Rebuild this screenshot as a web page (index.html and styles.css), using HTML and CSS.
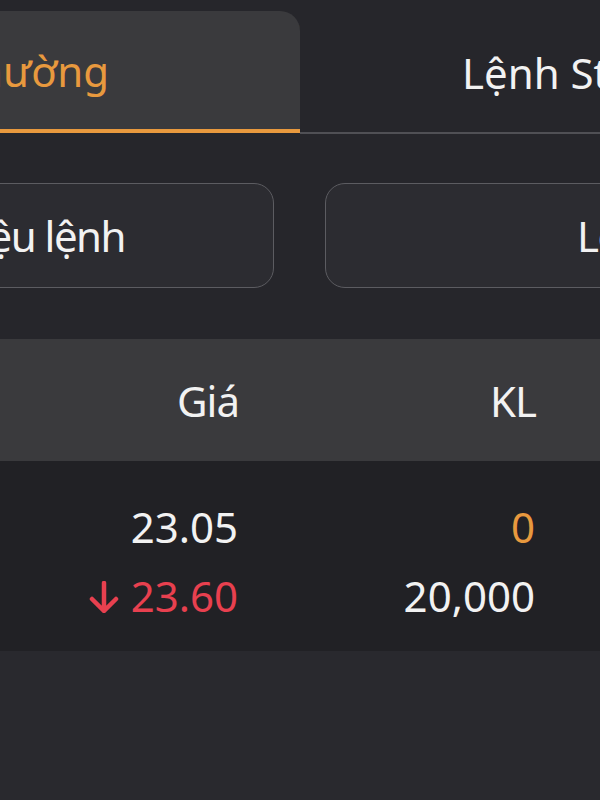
FILE: index.html
```html
<!DOCTYPE html>
<html lang="vi">

<head>
  <meta charset="UTF-8">
  <meta name="viewport" content="width=device-width, initial-scale=1.0">
  <title>Sổ lệnh</title>

  <link rel="stylesheet" href="styles.css">
</head>

<body>
  <main class="app">

    <nav class="tabs">
      <div class="tab tab-active"><span>Lệnh Thường</span></div>
      <div class="tab tab-other"><span>Lệnh Stop</span></div>
    </nav>

    <section class="fields">
      <div class="field field-left"><span>Số hiệu lệnh</span></div>
      <div class="field field-right"><span>Loại lệnh</span></div>
    </section>

    <section class="table">
      <div class="row head">
        <div class="cell">Giá</div>
        <div class="cell">KL</div>
        <div class="cell"></div>
      </div>

      <div class="body">
        <div class="row">
          <div class="cell">23.05</div>
          <div class="cell orange">0</div>
          <div class="cell"></div>
        </div>
        <div class="row">
          <div class="cell red">
            <svg class="arrow" width="30" height="32" viewBox="0 0 30 32">
              <path d="M15 2 V29 M3 18 L15 30 L27 18" fill="none" stroke="currentColor" stroke-width="4.5" stroke-linecap="round" stroke-linejoin="round"/>
            </svg>23.60
          </div>
          <div class="cell">20,000</div>
          <div class="cell"></div>
        </div>
      </div>
    </section>

  </main>
</body>

</html>
```

FILE: styles.css
```css
:root {
  --bg: #26262b;
  --panel: #3a3a3d;
  --rows: #212125;
  --line: #505055;
  --text: #f2f2f2;
  --orange: #e8993e;
  --red: #e8404f;
}

* {
  box-sizing: border-box;
}

body {
  margin: 0;
  overflow: hidden;
  background: #29292e;
  color: var(--text);
  font-family: "Noto Sans", "Open Sans", sans-serif;
  font-size: 42px;
}

/* the phone view is cropped, so the app starts left of the window */
.app {
  width: 1200px;
  margin-left: -300px;
  background: var(--bg);
  overflow: hidden;
}

.tabs {
  display: grid;
  grid-template-columns: 600px 600px;
  align-items: end;
  padding-top: 11px;
}

.tab {
  display: flex;
  align-items: center;
  white-space: nowrap;
}

.tab-active {
  height: 122px;
  justify-content: flex-end;
  padding-right: 191px;
  padding-bottom: 4px;
  background: var(--panel);
  color: var(--orange);
  border-radius: 0 20px 0 0;
  box-shadow: inset 0 -4px 0 var(--orange);
}

.tab-other {
  height: 122px;
  padding-left: 162px;
  border-bottom: 2px solid var(--line);
  margin-bottom: -1px;
}

.fields {
  display: grid;
  grid-template-columns: 574px 574px;
  gap: 51px;
  margin-top: 50px;
  padding-bottom: 51px;
}

.field {
  height: 105px;
  display: flex;
  align-items: center;
  white-space: nowrap;
  letter-spacing: -1.5px;
  background: #2c2c31;
  border: 1.5px solid #5c5c61;
  border-radius: 20px;
}

.field-left {
  justify-content: flex-end;
  padding-right: 148px;
}

.field-right {
  padding-left: 251px;
}

.row {
  display: grid;
  grid-template-columns: 538px 297px 1fr;
}

.cell {
  display: flex;
  align-items: center;
  justify-content: flex-end;
  white-space: nowrap;
}

.head {
  height: 122px;
  background: var(--panel);
  letter-spacing: -1px;
}

.head .cell {
  margin-right: -1px;
}

.body {
  background: var(--rows);
  padding: 31px 0 21px;
}

.body .row {
  height: 69px;
}

.orange {
  color: var(--orange);
}

.red {
  color: var(--red);
}

.arrow {
  margin-right: 12px;
  margin-top: 2px;
}
```
